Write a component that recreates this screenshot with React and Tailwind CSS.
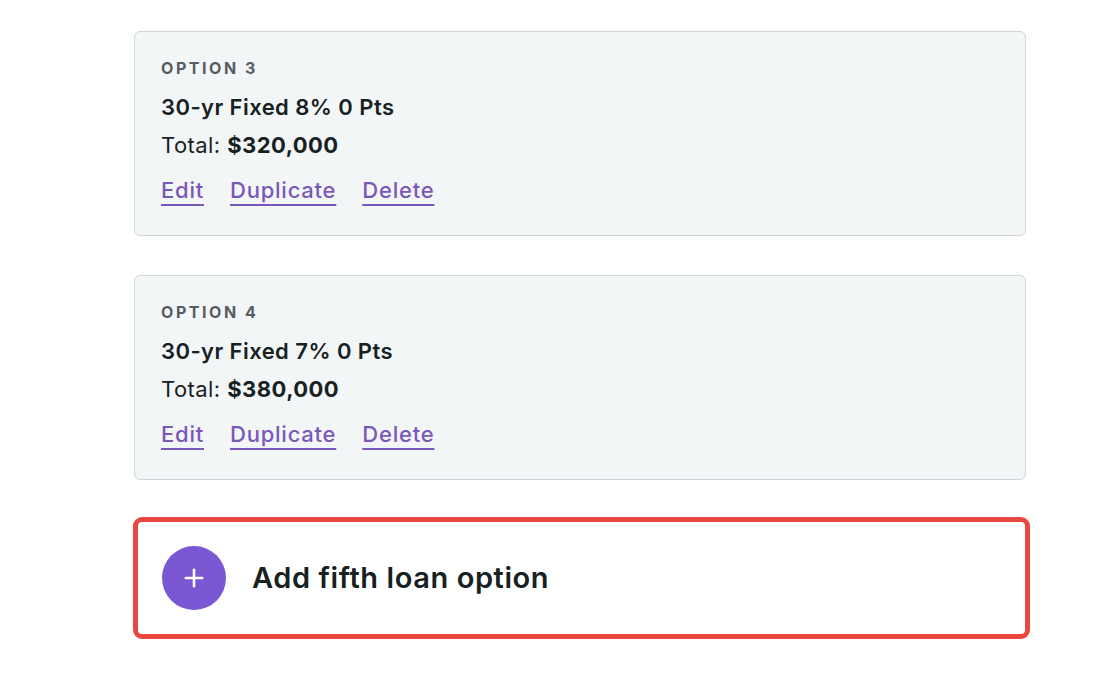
import React from "react";
import { Plus } from "lucide-react";

const OPTIONS = [
  { n: 3, title: "30-yr Fixed 8% 0 Pts", total: "$320,000" },
  { n: 4, title: "30-yr Fixed 7% 0 Pts", total: "$380,000" },
];

function OptionCard({ option }) {
  return (
    <div className="w-[892px] h-[205px] rounded-md border border-[#d0d5d8] bg-[#f3f6f7] px-[26px] pt-[26px]">
      <div className="text-[16px] leading-[20px] font-bold tracking-[0.16em] text-[#575d62]">
        OPTION {option.n}
      </div>
      <div className="mt-[15px] text-[22px] leading-[28px] font-semibold tracking-[0.02em] text-[#17211f]">
        {option.title}
      </div>
      <div className="mt-[10px] text-[22px] leading-[28px] tracking-[0.02em] text-[#17211f]">
        Total: <span className="font-bold">{option.total}</span>
      </div>
      {/* actions */}
      <div className="mt-[17px] flex gap-[26px] text-[22px] leading-[28px] font-medium tracking-[0.035em] text-[#7a58b9]">
        {["Edit", "Duplicate", "Delete"].map((l) => (
          <a key={l} href="#" className="underline decoration-2 underline-offset-[6px]">
            {l}
          </a>
        ))}
      </div>
    </div>
  );
}

export default function App() {
  return (
    <div className="min-h-[689px] bg-white pl-[134px] pt-[31px] font-['Inter','Liberation_Sans',sans-serif]">
      <div className="flex flex-col gap-[39px]">
        {OPTIONS.map((o) => (
          <OptionCard key={o.n} option={o} />
        ))}
        <button className="-ml-px -mt-[2px] flex h-[122px] w-[897px] items-center gap-[26px] rounded-[9px] border-[5px] border-[#e8483f] bg-white pl-[24px] text-left">
          <span className="flex h-[64px] w-[64px] items-center justify-center rounded-full bg-[#7b58d3] text-white">
            <Plus size={28} strokeWidth={2.2} />
          </span>
          <span className="text-[29px] font-semibold tracking-[0.02em] text-[#17211f]">Add fifth loan option</span>
        </button>
      </div>
    </div>
  );
}
